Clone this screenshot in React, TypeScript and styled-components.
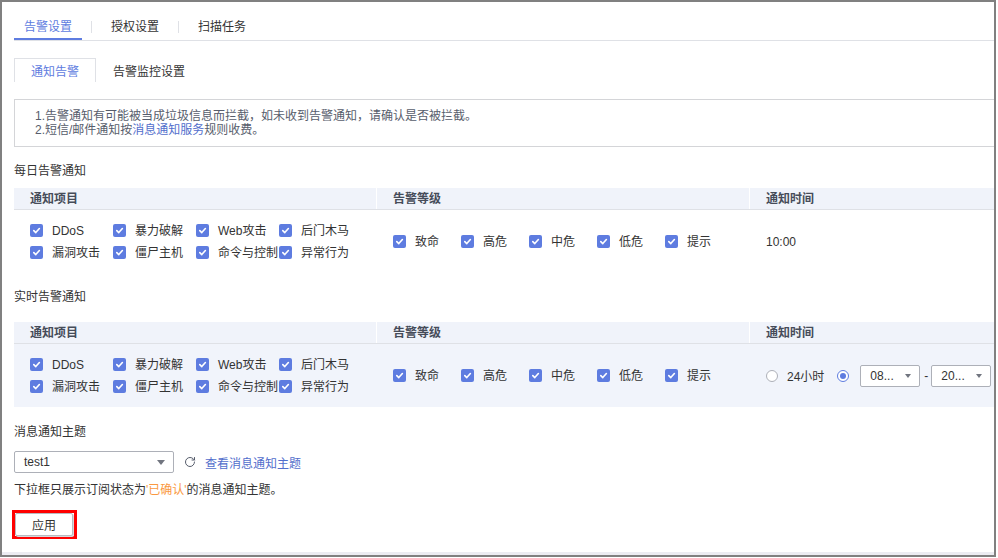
import React from "react";
import styled, { createGlobalStyle } from "styled-components";
import { RotateCw } from "lucide-react";

const GlobalStyle = createGlobalStyle`
  html, body { margin: 0; padding: 0; background: #fff; }
  body {
    font-family: "Liberation Sans", "Noto Sans CJK SC", sans-serif;
    font-size: 12px;
    color: #333;
  }
  * { box-sizing: border-box; }
`;

const BLUE = "#5e7ce0";

const Frame = styled.div`
  width: 996px;
  height: 557px;
  border: 2px solid #808080;
  overflow: hidden;
  display: flex;
  flex-direction: column;
  background: #fff;
`;

const Viewport = styled.div`
  flex: 1;
  overflow: hidden;
`;

const ScrollTrack = styled.div`
  height: 3px;
  flex-shrink: 0;
  background: #ececf2;
`;

const Content = styled.div`
  width: 1160px;
  padding-left: 12px;
`;

const TabBar = styled.div`
  display: flex;
  height: 39px;
  border-bottom: 1px solid #dfe1e6;
`;

const Tab = styled.div<{ $active?: boolean }>`
  height: 38px;
  width: 68px;
  text-align: center;
  padding-top: 15px;
  line-height: 20px;
  color: ${(p) => (p.$active ? BLUE : "#333")};
  border-bottom: 2px solid ${(p) => (p.$active ? BLUE : "transparent")};
`;

const TabSep = styled.div`
  width: 1px;
  height: 12px;
  margin: 19px 9px 0;
  background: #dfe1e6;
`;

const SubTabs = styled.div`
  display: flex;
  margin-top: 17px;
  height: 24px;
`;

const SubTab = styled.div<{ $active?: boolean }>`
  height: 24px;
  padding: 2px 16px 0;
  line-height: 22px;
  border: 1px solid ${(p) => (p.$active ? "#dfe1e6" : "transparent")};
  border-bottom: none;
  color: ${(p) => (p.$active ? BLUE : "#333")};
`;

const Notice = styled.div`
  margin-top: 17px;
  border: 1px solid #d4d5d8;
  padding: 9px 20px;
  line-height: 14px;
  color: #575d6c;
`;

const Link = styled.span`
  color: #526ecc;
`;

const SectionTitle = styled.div<{ $top: number; $bottom: number }>`
  margin-top: ${(p) => p.$top}px;
  margin-bottom: ${(p) => p.$bottom}px;
  line-height: 20px;
  color: #333;
`;

const Table = styled.div`
  width: 1140px;
`;

const HeadRow = styled.div`
  display: flex;
  height: 22px;
  background: #f0f3fa;
  border-bottom: 1px solid #dfe1e6;
`;

const HeadCell = styled.div<{ $w: number }>`
  width: ${(p) => p.$w}px;
  flex-shrink: 0;
  padding: 1px 0 0 16px;
  line-height: 21px;
  font-weight: bold;
  color: #464c59;
  border-right: 1px solid #fff;
`;

const BodyRow = styled.div<{ $shaded?: boolean }>`
  display: flex;
  height: 63px;
  background: ${(p) => (p.$shaded ? "#f1f4fb" : "#fff")};
`;

const BodyCell = styled.div<{ $w: number }>`
  width: ${(p) => p.$w}px;
  flex-shrink: 0;
  padding-left: 16px;
  display: flex;
  align-items: center;
`;

const ItemGrid = styled.div`
  display: grid;
  grid-template-columns: repeat(4, 83px);
  grid-auto-rows: 22px;
`;

const CheckItem = styled.label<{ $w?: number }>`
  display: flex;
  align-items: center;
  white-space: nowrap;
  width: ${(p) => (p.$w ? `${p.$w}px` : "auto")};
  flex-shrink: 0;
  line-height: 22px;
  color: #333;
`;

const Box = styled.span`
  width: 13px;
  height: 13px;
  border-radius: 2px;
  background: ${BLUE};
  display: inline-flex;
  align-items: center;
  justify-content: center;
  margin-right: 9px;
  flex-shrink: 0;
`;

const LevelRow = styled.div`
  display: flex;
`;

const TimeRow = styled.div`
  display: flex;
  align-items: center;
`;

const Radio = styled.span<{ $on?: boolean }>`
  width: 12px;
  height: 12px;
  border-radius: 50%;
  border: 1px solid ${(p) => (p.$on ? BLUE : "#adb0b8")};
  background: #fff;
  display: inline-flex;
  align-items: center;
  justify-content: center;
  flex-shrink: 0;
  &::after {
    content: "";
    width: 6px;
    height: 6px;
    border-radius: 50%;
    background: ${(p) => (p.$on ? BLUE : "transparent")};
  }
`;

const RadioLabel = styled.span`
  margin: 0 13px 0 9px;
  color: #333;
`;

const Gap = styled.span<{ $w: number }>`
  width: ${(p) => p.$w}px;
  flex-shrink: 0;
`;

const Select = styled.div<{ $w: number }>`
  width: ${(p) => p.$w}px;
  height: 22px;
  border: 1px solid #adb0b8;
  border-radius: 2px;
  background: #fff;
  display: flex;
  align-items: center;
  justify-content: space-between;
  padding: 0 8px 0 9px;
  color: #333;
`;

const Caret = styled.span<{ $size: number }>`
  width: 0;
  height: 0;
  border-left: ${(p) => p.$size}px solid transparent;
  border-right: ${(p) => p.$size}px solid transparent;
  border-top: ${(p) => p.$size + 1}px solid #71757f;
`;

const Dash = styled.span`
  margin: 0 3px 0 4px;
  color: #333;
`;

const TopicRow = styled.div`
  display: flex;
  align-items: center;
  margin-top: 9px;
`;

const Refresh = styled.span`
  display: inline-flex;
  margin: 0 9px 0 10px;
  color: #575d6c;
`;

const Hint = styled.div`
  margin-top: 7px;
  line-height: 20px;
  color: #333;
`;

const Warn = styled.span`
  color: #fa9841;
`;

const Highlight = styled.div`
  margin-top: 10px;
  margin-left: -2px;
  display: inline-flex;
  border: 3px solid #ff0000;
  padding: 0 1px 0 0;
`;

const Button = styled.button`
  width: 58px;
  height: 23px;
  border: 1px solid #b8bac0;
  border-radius: 2px;
  background: #fff;
  font: inherit;
  color: #333;
  padding: 0;
  box-shadow: 1px 1px 0 #d6d7da;
`;

const Check = () => (
  <Box>
    <svg width="9" height="9" viewBox="0 0 10 10">
      <path d="M2 5.2 L4.2 7.3 L8.2 2.8" fill="none" stroke="#fff" strokeWidth="1.8" strokeLinecap="round" strokeLinejoin="round" />
    </svg>
  </Box>
);

const items = ["DDoS", "暴力破解", "Web攻击", "后门木马", "漏洞攻击", "僵尸主机", "命令与控制", "异常行为"];
const levels = ["致命", "高危", "中危", "低危", "提示"];

const COL1 = 363;
const COL2 = 373;
const COL3 = 404;

const Items = () => (
  <ItemGrid>
    {items.map((t) => (
      <CheckItem key={t}>
        <Check />
        {t}
      </CheckItem>
    ))}
  </ItemGrid>
);

const Levels = () => (
  <LevelRow>
    {levels.map((t) => (
      <CheckItem key={t} $w={68}>
        <Check />
        {t}
      </CheckItem>
    ))}
  </LevelRow>
);

const Head = () => (
  <HeadRow>
    <HeadCell $w={COL1}>通知项目</HeadCell>
    <HeadCell $w={COL2}>告警等级</HeadCell>
    <HeadCell $w={COL3}>通知时间</HeadCell>
  </HeadRow>
);

export default function App() {
  return (
    <>
      <GlobalStyle />
      <Frame>
        <Viewport>
          <Content>
            <TabBar>
              <Tab $active>告警设置</Tab>
              <TabSep />
              <Tab>授权设置</Tab>
              <TabSep />
              <Tab>扫描任务</Tab>
            </TabBar>

            <SubTabs>
              <SubTab $active>通知告警</SubTab>
              <SubTab>告警监控设置</SubTab>
            </SubTabs>

            <Notice>
              <div>1.告警通知有可能被当成垃圾信息而拦截，如未收到告警通知，请确认是否被拦截。</div>
              <div>
                2.短信/邮件通知按<Link>消息通知服务</Link>规则收费。
              </div>
            </Notice>

            <SectionTitle $top={14} $bottom={7}>每日告警通知</SectionTitle>
            <Table>
              <Head />
              <BodyRow>
                <BodyCell $w={COL1}>
                  <Items />
                </BodyCell>
                <BodyCell $w={COL2}>
                  <Levels />
                </BodyCell>
                <BodyCell $w={COL3}>10:00</BodyCell>
              </BodyRow>
            </Table>

            <SectionTitle $top={14} $bottom={15}>实时告警通知</SectionTitle>
            <Table>
              <Head />
              <BodyRow $shaded>
                <BodyCell $w={COL1}>
                  <Items />
                </BodyCell>
                <BodyCell $w={COL2}>
                  <Levels />
                </BodyCell>
                <BodyCell $w={COL3}>
                  <TimeRow>
                    <Radio />
                    <RadioLabel>24小时</RadioLabel>
                    <Radio $on />
                    <Gap $w={11} />
                    <Select $w={60}>
                      <span>08...</span>
                      <Caret $size={3} />
                    </Select>
                    <Dash>-</Dash>
                    <Select $w={60}>
                      <span>20...</span>
                      <Caret $size={3} />
                    </Select>
                  </TimeRow>
                </BodyCell>
              </BodyRow>
            </Table>

            <SectionTitle $top={15} $bottom={0}>消息通知主题</SectionTitle>
            <TopicRow>
              <Select $w={160}>
                <span>test1</span>
                <Caret $size={4} />
              </Select>
              <Refresh>
                <RotateCw size={12} strokeWidth={2} />
              </Refresh>
              <Link>查看消息通知主题</Link>
            </TopicRow>
            <Hint>
              下拉框只展示订阅状态为<Warn>'已确认'</Warn>的消息通知主题。
            </Hint>
            <Highlight>
              <Button>应用</Button>
            </Highlight>
          </Content>
        </Viewport>
        <ScrollTrack />
      </Frame>
    </>
  );
}
